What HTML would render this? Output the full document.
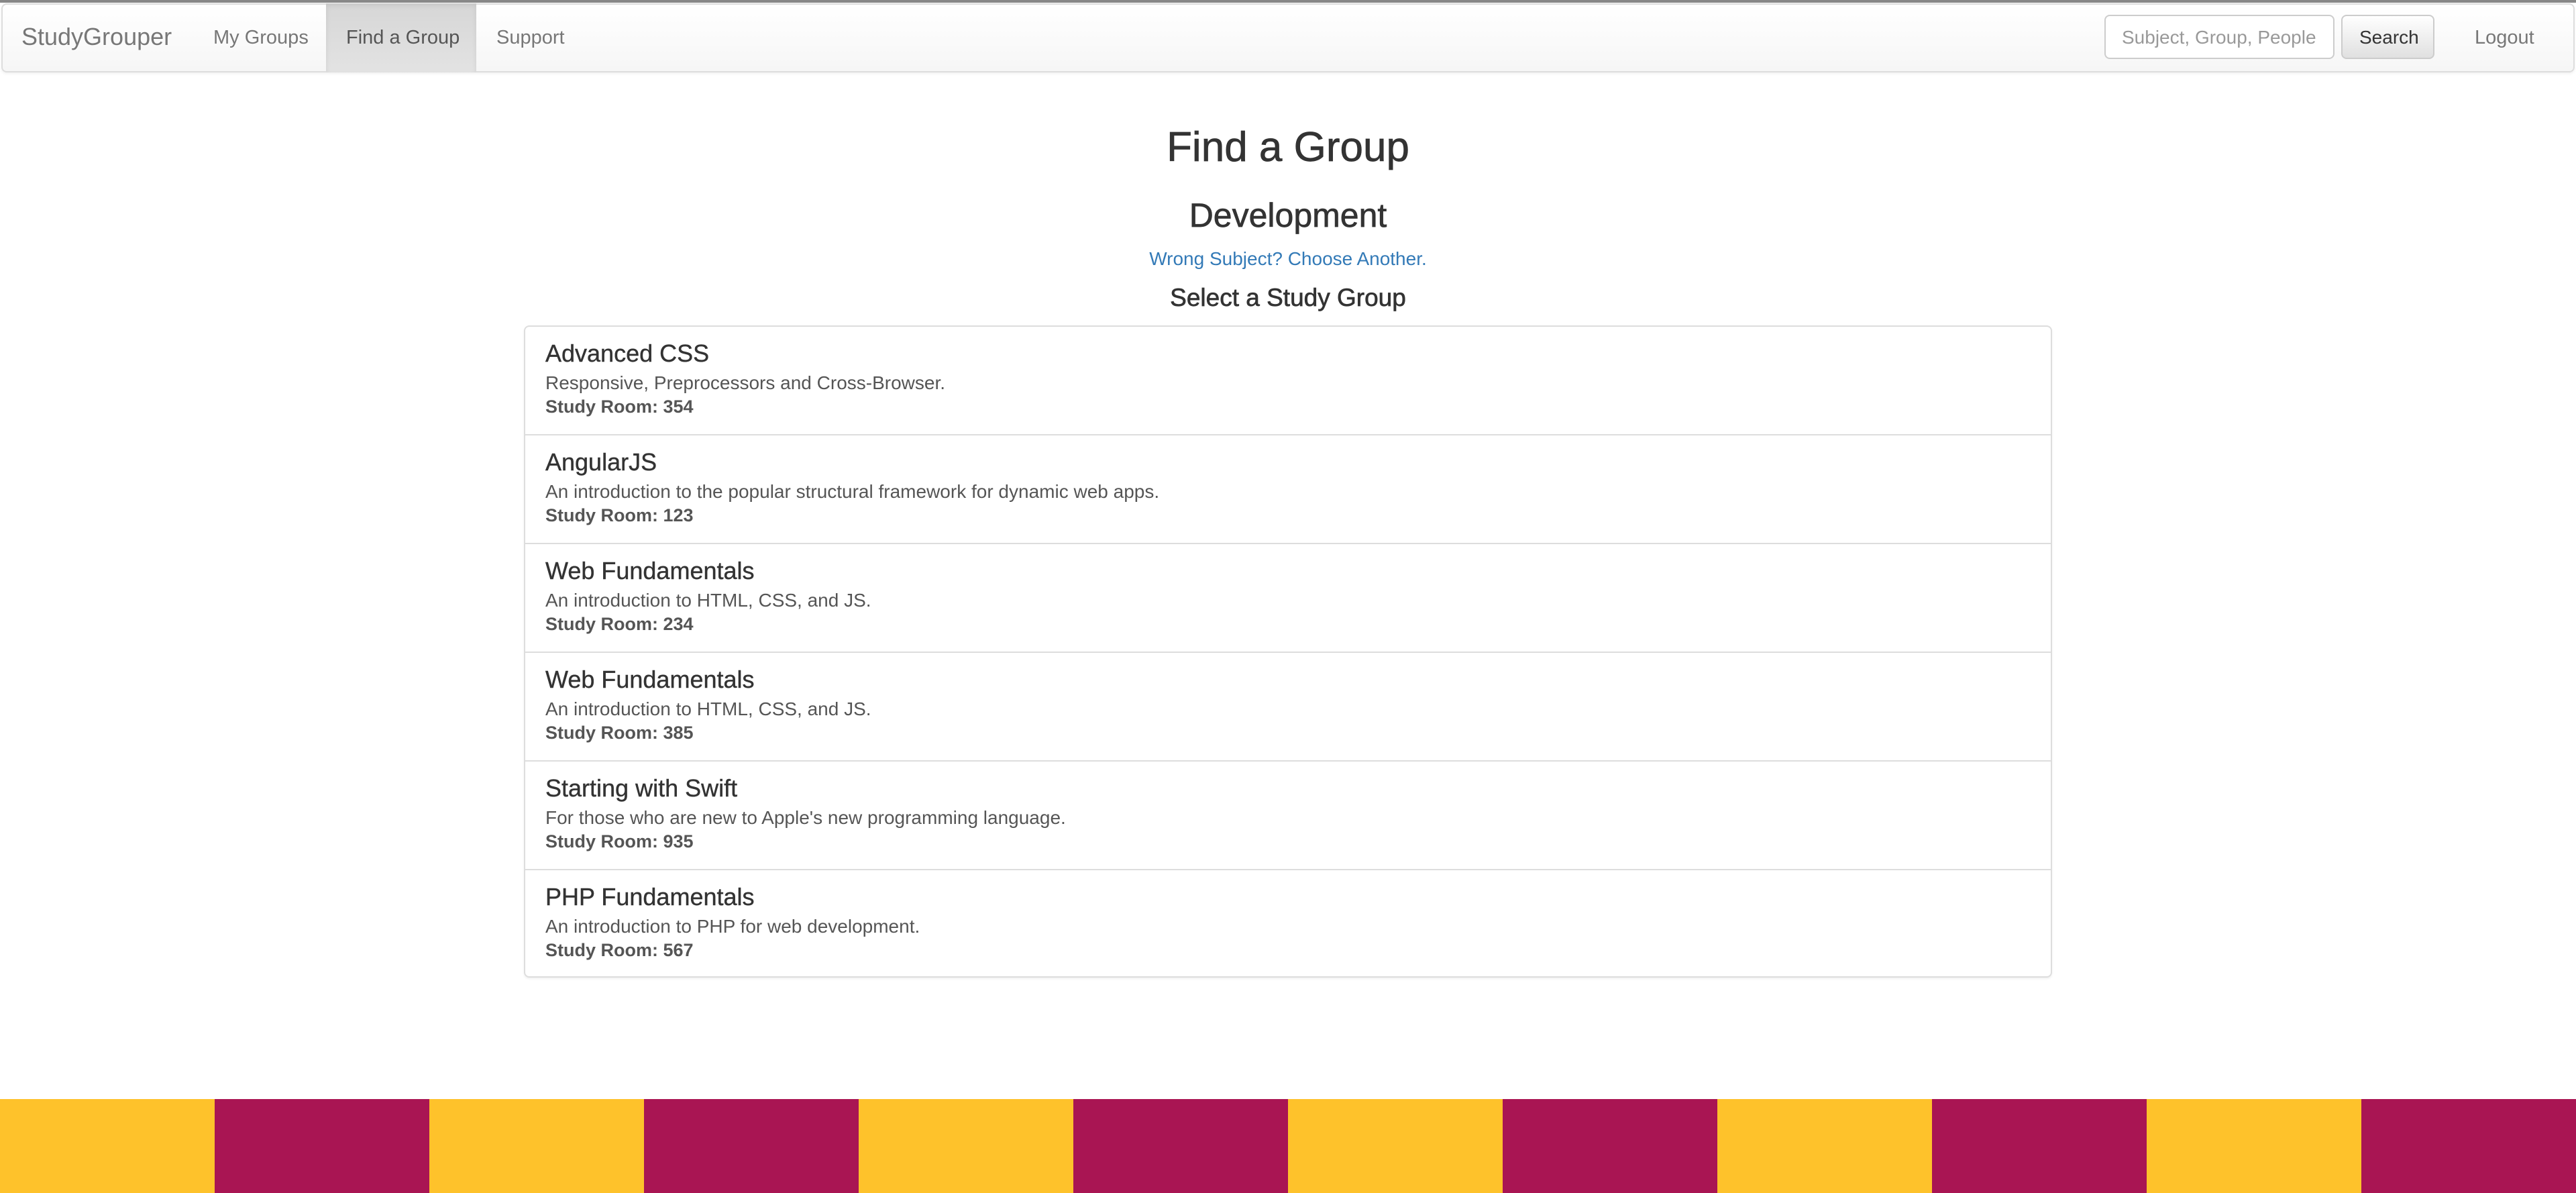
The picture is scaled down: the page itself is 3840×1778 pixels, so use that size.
<!DOCTYPE html>
<html><head><meta charset="utf-8"><style>
*{margin:0;padding:0;box-sizing:border-box}
body{width:3840px;height:1778px;background:#fff;font-family:"Liberation Sans",Arial,sans-serif;color:#333;position:relative;overflow:hidden}
.a{position:absolute;white-space:nowrap}
.topline{position:absolute;left:0;top:0;width:3840px;height:4px;background:#888}
.nav{position:absolute;left:2px;top:5px;width:3836px;height:103px;border:2px solid #ddd;border-radius:8px;background:linear-gradient(#fff,#f6f6f6);box-shadow:0 2px 4px rgba(0,0,0,.06)}
.active{position:absolute;left:486px;top:5px;width:224px;height:103px;background:linear-gradient(#d6d6d6,#e3e3e3);box-shadow:inset 0 3px 8px rgba(0,0,0,.08)}
.navt{font-size:29px;color:#777;top:40px}
.input{position:absolute;left:3137px;top:22px;width:343px;height:66px;border:2px solid #ccc;border-radius:8px;background:#fff}
.btn{position:absolute;left:3490px;top:22px;width:139px;height:66px;border:2px solid #ccc;border-radius:8px;background:linear-gradient(#fff,#e0e0e0)}
.c{left:0;width:3840px;text-align:center;-webkit-text-stroke:0.7px #333}
.panel{position:absolute;left:781px;top:485px;width:2278px;height:972px;border:2px solid #ddd;border-radius:8px;box-shadow:0 2px 3px rgba(0,0,0,.06)}
.item{height:162px;border-bottom:2px solid #ddd;position:relative}
.item:last-child{border-bottom:none}
.item .t{position:absolute;left:30px;top:19px;font-size:36px;color:#333;-webkit-text-stroke:0.4px #333}
.item .d{position:absolute;left:30px;top:68px;font-size:28px;color:#555}
.item .r{position:absolute;left:30px;top:104px;font-size:27px;color:#555;font-weight:bold}
.stripes{position:absolute;left:0;top:1638px;width:3840px;height:140px;display:flex}
.stripes div{flex:1}
.y{background:#fec22b}.m{background:#a91553}
</style></head><body>
<div class="topline"></div>
<div class="nav"></div>
<div class="active"></div>
<div class="a" style="left:32px;top:34px;font-size:36px;color:#777">StudyGrouper</div>
<div class="a navt" style="left:318px">My Groups</div>
<div class="a navt" style="left:516px;color:#555">Find a Group</div>
<div class="a navt" style="left:740px">Support</div>
<div class="input"></div>
<div class="a" style="left:3163px;top:40px;font-size:28px;color:#999">Subject, Group, People</div>
<div class="btn"></div>
<div class="a" style="left:3517px;top:40px;font-size:28px;color:#333">Search</div>
<div class="a navt" style="left:3689px">Logout</div>

<div class="a c" style="top:184px;font-size:62px;color:#333">Find a Group</div>
<div class="a c" style="top:292px;font-size:50px;color:#333">Development</div>
<div class="a c" style="top:370px;font-size:28px;color:#337ab7;-webkit-text-stroke:0">Wrong Subject? Choose Another.</div>
<div class="a c" style="top:423px;font-size:37px;color:#333">Select a Study Group</div>

<div class="panel">
<div class="item"><div class="t">Advanced CSS</div><div class="d">Responsive, Preprocessors and Cross-Browser.</div><div class="r">Study Room: 354</div></div>
<div class="item"><div class="t">AngularJS</div><div class="d">An introduction to the popular structural framework for dynamic web apps.</div><div class="r">Study Room: 123</div></div>
<div class="item"><div class="t">Web Fundamentals</div><div class="d">An introduction to HTML, CSS, and JS.</div><div class="r">Study Room: 234</div></div>
<div class="item"><div class="t">Web Fundamentals</div><div class="d">An introduction to HTML, CSS, and JS.</div><div class="r">Study Room: 385</div></div>
<div class="item"><div class="t">Starting with Swift</div><div class="d">For those who are new to Apple's new programming language.</div><div class="r">Study Room: 935</div></div>
<div class="item"><div class="t">PHP Fundamentals</div><div class="d">An introduction to PHP for web development.</div><div class="r">Study Room: 567</div></div>
</div>

<div class="stripes"><div class="y"></div><div class="m"></div><div class="y"></div><div class="m"></div><div class="y"></div><div class="m"></div><div class="y"></div><div class="m"></div><div class="y"></div><div class="m"></div><div class="y"></div><div class="m"></div></div>
</body></html>
